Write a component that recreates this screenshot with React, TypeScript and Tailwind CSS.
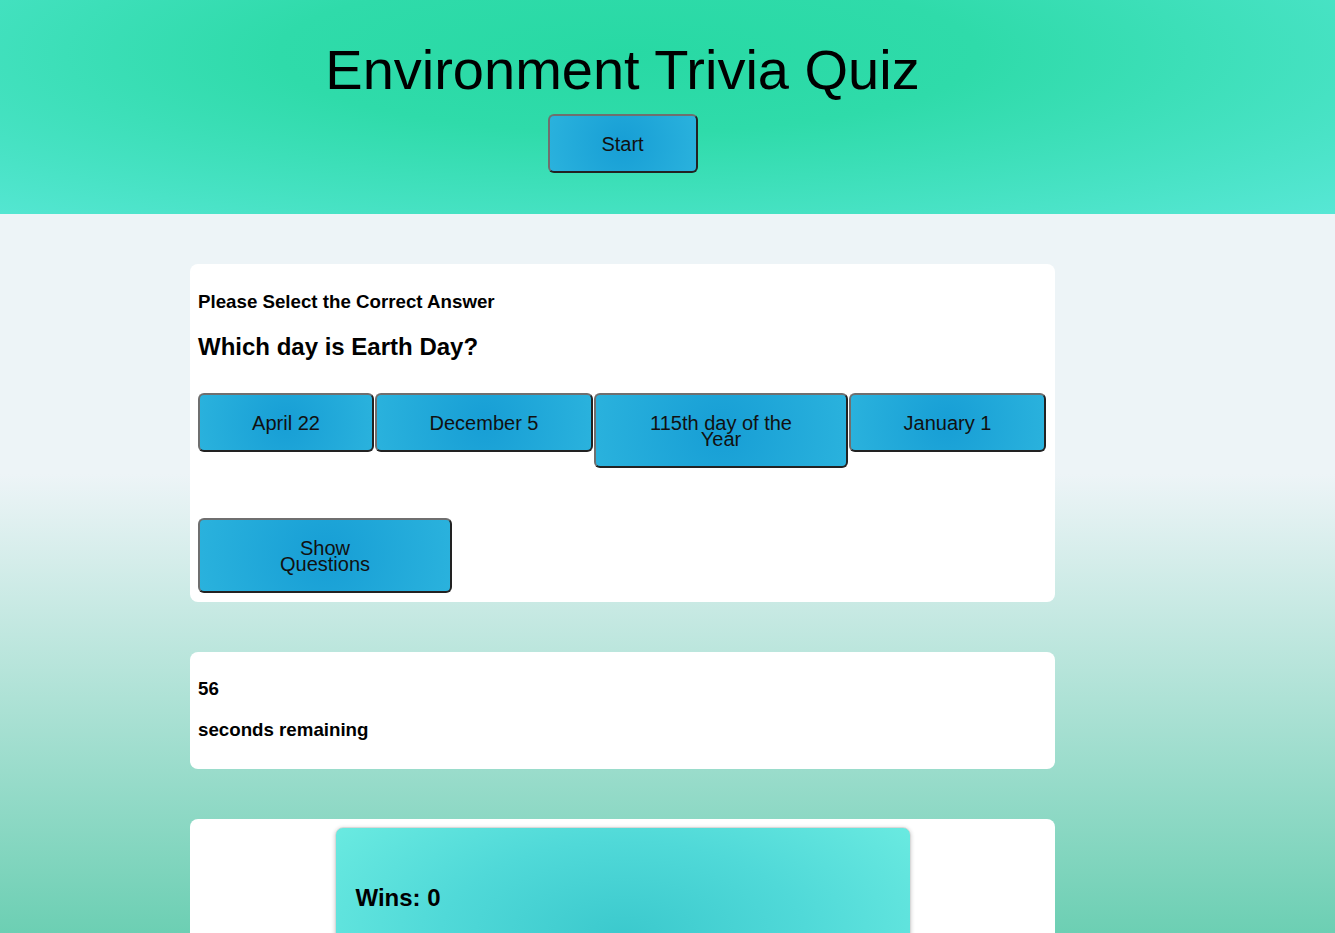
import React from "react";

const answers = [
    { label: "April 22", width: "w-[176px]" },
    { label: "December 5", width: "w-[218px]" },
    { label: "115th day of the Year", width: "w-[254px]" },
    { label: "January 1", width: "w-[197px]" },
];

const btn =
    "rounded-[6px] border-2 border-t-[#6f6f6f] border-l-[#6f6f6f] border-b-[#222] border-r-[#222] bg-[radial-gradient(circle,#179ed5_0%,#2ab2dd_100%)] text-[20px] leading-4 text-[#111] text-center";

export default function App() {
    return (
        <div className="min-h-screen font-['Liberation_Sans',Arial,sans-serif] text-black">
            <header className="h-[214px] bg-[radial-gradient(ellipse_at_47%_25%,#28d9a4_0%,#2fdbaa_35%,#57e7d5_100%)]">
                <div className="w-[1245px] flex flex-col items-center pt-[38px]">
                    <h1 className="text-[56px] leading-[64px]">Environment Trivia Quiz</h1>
                    <button className={`${btn} mt-[12px] w-[150px] h-[59px]`}>Start</button>
                </div>
            </header>

            <main className="bg-[linear-gradient(to_bottom,#edf4f7_260px,#6ccfb3_720px)] pt-[50px] pb-[60px]">
                <div className="w-[1245px] flex flex-col items-center gap-[50px]">
                    <section className="w-[865px] bg-white rounded-[8px] px-2 pt-[27px] pb-[9px]">
                        <h3 className="text-[18.72px] leading-[22px] font-bold">Please Select the Correct Answer</h3>
                        <h2 className="mt-[20px] text-[24px] leading-[28px] font-bold">Which day is Earth Day?</h2>
                        <div className="mt-[32px] flex items-start gap-px">
                            {answers.map(a => (
                                <button key={a.label} className={`${btn} ${a.width} py-[19.5px] px-[50px]`}>
                                    {a.label === "115th day of the Year" ? (
                                        <>115th day of the<br />Year</>
                                    ) : a.label}
                                </button>
                            ))}
                        </div>
                        <button className={`${btn} mt-[50px] w-[254px] py-[19.5px]`}>
                            Show<br />Questions
                        </button>
                    </section>

                    <section className="w-[865px] bg-white rounded-[8px] px-2 pt-[26px] pb-[28px]">
                        <h3 className="text-[18.72px] leading-[22px] font-bold">56</h3>
                        <h3 className="mt-[19px] text-[18.72px] leading-[22px] font-bold">seconds remaining</h3>
                    </section>

                    <section className="w-[865px] bg-white rounded-[8px] p-2 flex justify-center">
                        <div className="w-[576px] h-[260px] rounded-[8px] border border-[#d8d8d8] shadow-[0_1px_4px_rgba(0,0,0,0.2)] bg-[radial-gradient(ellipse_at_50%_42%,#3bc9cd_0%,#50d9d8_45%,#71efe3_100%)] px-[20px] pt-[56px]">
                            <h2 className="text-[24px] leading-[28px] font-bold">Wins: 0</h2>
                        </div>
                    </section>
                </div>
            </main>
        </div>
    );
}
